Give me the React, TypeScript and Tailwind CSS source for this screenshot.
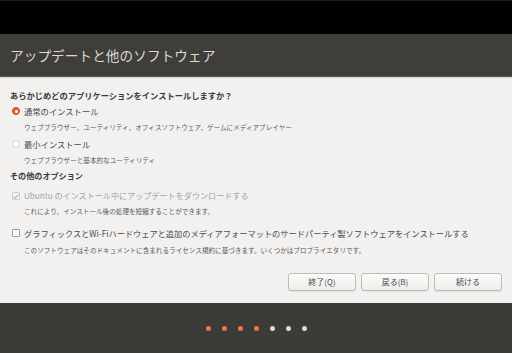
const jp = "font-['Noto_Sans_CJK_JP','Noto_Sans',sans-serif]";

const Radio = ({ checked }: { checked?: boolean }) =>
  checked ? (
    <span className="w-[8px] h-[8px] rounded-full bg-[#e8632c] border border-[#c9501f] flex items-center justify-center">
      <span className="w-[3px] h-[3px] rounded-full bg-white" />
    </span>
  ) : (
    <span className="w-[8px] h-[8px] rounded-full bg-white border border-[#d2d0cc]" />
  );

const Check = ({ checked, disabled }: { checked?: boolean; disabled?: boolean }) => (
  <span
    className={`w-[8px] h-[8px] rounded-[1px] border flex items-center justify-center ${
      disabled ? "border-[#d0cecb] bg-[#f4f3f2]" : "border-[#9f9d99] bg-white"
    }`}
  >
    {checked && (
      <svg width="7" height="7" viewBox="0 0 8 8">
        <path d="M1 4.2 L3.2 6.3 L7 1.6" fill="none" stroke="#b3b1ae" strokeWidth="1.4" />
      </svg>
    )}
  </span>
);

const Button = ({ label }: { label: string }) => (
  <button className="w-[68px] h-[18px] rounded-[3px] border border-[#bdbbb6] bg-gradient-to-b from-[#fbfbfa] to-[#eeedeb] text-[8px] text-[#4a4a4a] flex items-center justify-center shadow-[0_1px_0_rgba(0,0,0,0.05)]">
    {label}
  </button>
);

export default function App() {
  return (
    <div className={`w-[512px] h-[353px] flex flex-col overflow-hidden ${jp}`}>
      <div className="h-[34px] bg-black border-t border-[#1c1c1c]" />
      <div className="h-[43px] bg-[#3f3e3a] border-b border-[#5b5955] flex items-center pl-[10px]">
        <span className="text-[13.6px] text-[#dedad3] tracking-[0.1px]">
          アップデートと他のソフトウェア
        </span>
      </div>

      <div className="h-[226px] bg-[#f2f1f0] border-t border-[#d6d4d0] flex flex-col pt-[9px] pl-[10px] pr-[10px]">
        <div className="h-[16px] flex items-center text-[8.25px] font-bold text-[#3a3a3a]">
          あらかじめどのアプリケーションをインストールしますか？
        </div>
        <div className="h-[16px] flex items-center gap-[4px] pl-[2px]">
          <Radio checked />
          <span className="text-[8.3px] text-[#4a4a4a]">通常のインストール</span>
        </div>
        <div className="h-[17px] flex items-center pl-[14px] text-[6.6px] text-[#5a5a5a]">
          ウェブブラウザー、ユーティリティ、オフィスソフトウェア、ゲームにメディアプレイヤー
        </div>
        <div className="h-[16px] flex items-center gap-[4px] pl-[2px]">
          <Radio />
          <span className="text-[8.3px] text-[#4a4a4a]">最小インストール</span>
        </div>
        <div className="h-[17px] flex items-center pl-[14px] text-[6.6px] text-[#5a5a5a]">
          ウェブブラウザーと基本的なユーティリティ
        </div>
        <div className="h-[15px] flex items-center text-[8.1px] font-bold text-[#3a3a3a]">
          その他のオプション
        </div>

        <div className="h-[16px] mt-[4px] flex items-center gap-[4px] pl-[2px]">
          <Check checked disabled />
          <span className="text-[8.1px] text-[#a3a3a3]">
            Ubuntu のインストール中にアップデートをダウンロードする
          </span>
        </div>
        <div className="h-[16px] flex items-center pl-[14px] text-[6.6px] text-[#5a5a5a]">
          これにより、インストール後の処理を短縮することができます。
        </div>

        <div className="h-[16px] mt-[5px] flex items-center gap-[4px] pl-[2px]">
          <Check />
          <span className="text-[8.22px] text-[#4a4a4a]">
            グラフィックスとWi-Fiハードウェアと追加のメディアフォーマットのサードパーティ製ソフトウェアをインストールする
          </span>
        </div>
        <div className="h-[16px] mt-[2px] flex items-center pl-[14px] text-[6.6px] text-[#5a5a5a]">
          このソフトウェアはそのドキュメントに含まれるライセンス規約に基づきます。いくつかはプロプライエタリです。
        </div>

        <div className="mt-[14px] flex justify-end gap-[5px]">
          <Button label="終了(Q)" />
          <Button label="戻る(B)" />
          <Button label="続ける" />
        </div>
      </div>

      <div className="flex-1 bg-[#3c3b37] flex items-center justify-center gap-[11px]">
        <span className="w-[5px] h-[5px] rounded-full bg-[#f07746]" />
        <span className="w-[5px] h-[5px] rounded-full bg-[#f07746]" />
        <span className="w-[5px] h-[5px] rounded-full bg-[#f07746]" />
        <span className="w-[5px] h-[5px] rounded-full bg-[#f07746]" />
        <span className="w-[5px] h-[5px] rounded-full bg-[#dcdbd9]" />
        <span className="w-[5px] h-[5px] rounded-full bg-[#dcdbd9]" />
        <span className="w-[5px] h-[5px] rounded-full bg-[#dcdbd9]" />
      </div>
    </div>
  );
}
